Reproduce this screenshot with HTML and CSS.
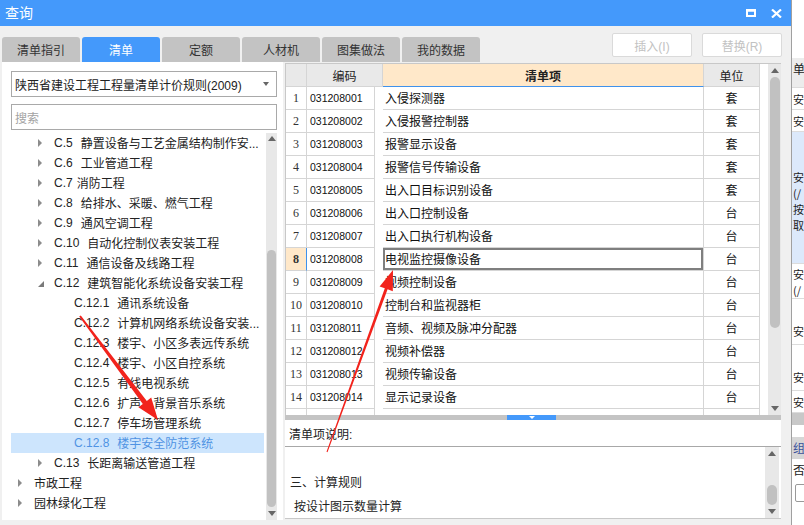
FILE: index.html
```html
<!DOCTYPE html>
<html lang="zh">
<head>
<meta charset="utf-8">
<title>查询</title>
<link rel="stylesheet" href="styles.css">
</head>
<body>
<div class="screen">
  <div class="dialog">
    <div class="titlebar">
      <span class="title">查询</span>
      <span class="winbtns">
        <svg width="10" height="8" viewBox="0 0 10 8"><rect x="1" y="1.5" width="8" height="5.5" fill="none" stroke="#fff" stroke-width="2"/><rect x="0" y="0" width="10" height="2.5" fill="#fff"/></svg>
        <svg width="11" height="9" viewBox="0 0 11 9"><path d="M1 0.5 L10 8.5 M10 0.5 L1 8.5" stroke="#fff" stroke-width="2.2"/></svg>
      </span>
    </div>
    <div class="toolbar">
      <div class="tabs">
        <div class="tab">清单指引</div>
        <div class="tab active">清单</div>
        <div class="tab">定额</div>
        <div class="tab">人材机</div>
        <div class="tab">图集做法</div>
        <div class="tab">我的数据</div>
      </div>
      <div class="actions">
        <div class="btn">插入(I)</div>
        <div class="btn">替换(R)</div>
      </div>
    </div>
    <div class="main">
      <div class="left">
        <div class="select"><span>陕西省建设工程工程量清单计价规则(2009)</span><span class="caret"></span></div>
        <div class="search">搜索</div>
        <div class="tree-wrap">
          <div class="tree">
            <div class="row l2"><span class="tri"></span><span class="code">C.5</span><span>静置设备与工艺金属结构制作安...</span></div>
            <div class="row l2"><span class="tri"></span><span class="code">C.6</span><span>工业管道工程</span></div>
            <div class="row l2"><span class="tri"></span><span class="code narrow">C.7</span><span>消防工程</span></div>
            <div class="row l2"><span class="tri"></span><span class="code">C.8</span><span>给排水、采暖、燃气工程</span></div>
            <div class="row l2"><span class="tri"></span><span class="code">C.9</span><span>通风空调工程</span></div>
            <div class="row l2"><span class="tri"></span><span class="code">C.10</span><span>自动化控制仪表安装工程</span></div>
            <div class="row l2"><span class="tri"></span><span class="code">C.11</span><span>通信设备及线路工程</span></div>
            <div class="row l2"><span class="tri open"></span><span class="code">C.12</span><span>建筑智能化系统设备安装工程</span></div>
            <div class="row l3"><span class="code">C.12.1</span><span>通讯系统设备</span></div>
            <div class="row l3"><span class="code">C.12.2</span><span>计算机网络系统设备安装...</span></div>
            <div class="row l3"><span class="code">C.12.3</span><span>楼宇、小区多表远传系统</span></div>
            <div class="row l3"><span class="code">C.12.4</span><span>楼宇、小区自控系统</span></div>
            <div class="row l3"><span class="code">C.12.5</span><span>有线电视系统</span></div>
            <div class="row l3"><span class="code">C.12.6</span><span>扩声、背景音乐系统</span></div>
            <div class="row l3"><span class="code">C.12.7</span><span>停车场管理系统</span></div>
            <div class="row l3 selected"><span class="code">C.12.8</span><span>楼宇安全防范系统</span></div>
            <div class="row l2"><span class="tri"></span><span class="code">C.13</span><span>长距离输送管道工程</span></div>
            <div class="row l1"><span class="tri"></span><span>市政工程</span></div>
            <div class="row l1"><span class="tri"></span><span>园林绿化工程</span></div>
          </div>
          <div class="sb sb-tree">
            <span class="sb-up"></span>
            <span class="sb-space"></span>
            <span class="sb-thumb"></span>
            <span class="sb-down"></span>
          </div>
        </div>
      </div>
      <div class="right">
        <div class="grid-wrap">
          <div class="grid">
            <div class="cell head"></div>
            <div class="cell head c">编码</div>
            <div class="cell head name c">清单项</div>
            <div class="cell head c">单位</div>

            <div class="cell num">1</div><div class="cell code">031208001</div><div class="cell">入侵探测器</div><div class="cell c">套</div>
            <div class="cell num">2</div><div class="cell code">031208002</div><div class="cell">入侵报警控制器</div><div class="cell c">套</div>
            <div class="cell num">3</div><div class="cell code">031208003</div><div class="cell">报警显示设备</div><div class="cell c">套</div>
            <div class="cell num">4</div><div class="cell code">031208004</div><div class="cell">报警信号传输设备</div><div class="cell c">套</div>
            <div class="cell num">5</div><div class="cell code">031208005</div><div class="cell">出入口目标识别设备</div><div class="cell c">套</div>
            <div class="cell num">6</div><div class="cell code">031208006</div><div class="cell">出入口控制设备</div><div class="cell c">台</div>
            <div class="cell num">7</div><div class="cell code">031208007</div><div class="cell">出入口执行机构设备</div><div class="cell c">台</div>
            <div class="cell num cur">8</div><div class="cell code">031208008</div><div class="cell focus">电视监控摄像设备</div><div class="cell c">台</div>
            <div class="cell num">9</div><div class="cell code">031208009</div><div class="cell">视频控制设备</div><div class="cell c">台</div>
            <div class="cell num">10</div><div class="cell code">031208010</div><div class="cell">控制台和监视器柜</div><div class="cell c">台</div>
            <div class="cell num">11</div><div class="cell code">031208011</div><div class="cell">音频、视频及脉冲分配器</div><div class="cell c">台</div>
            <div class="cell num">12</div><div class="cell code">031208012</div><div class="cell">视频补偿器</div><div class="cell c">台</div>
            <div class="cell num">13</div><div class="cell code">031208013</div><div class="cell">视频传输设备</div><div class="cell c">台</div>
            <div class="cell num">14</div><div class="cell code">031208014</div><div class="cell">显示记录设备</div><div class="cell c">台</div>
            <div class="cell num"></div><div class="cell code"></div><div class="cell"></div><div class="cell c"></div>
          </div>
          <div class="grid-gap"></div>
          <div class="sb sb-grid">
            <span class="sb-up"></span>
            <span class="sb-thumb"></span>
            <span class="sb-space"></span>
            <span class="sb-down"></span>
          </div>
        </div>
        <div class="splitter"><span class="grip"><span class="grip-arrow"></span></span></div>
        <div class="desc-head">清单项说明:</div>
        <div class="desc">
          <div class="desc-text">
            <div class="line">三、计算规则</div>
            <div class="line indent">按设计图示数量计算</div>
          </div>
          <div class="sb sb-desc">
            <span class="sb-up"></span>
            <span class="sb-space"></span>
            <span class="sb-thumb"></span>
            <span class="sb-down"></span>
          </div>
        </div>
      </div>
    </div>
  </div>
  <div class="behind">
    <div class="bseg b-top"></div>
    <div class="bseg b-head">单</div>
    <div class="bseg b-row">安</div>
    <div class="bseg b-row">安</div>
    <div class="bseg b-sel">安<br>(/<br>按<br>取</div>
    <div class="bseg b-two">安<br>(/</div>
    <div class="bseg b-mid">安</div>
    <div class="bseg b-mid">安</div>
    <div class="bseg b-short">安</div>
    <div class="bseg b-bar"></div>
    <div class="bseg b-blank"></div>
    <div class="bseg b-group">组</div>
    <div class="bseg b-no">否</div>
    <div class="bseg b-check"><span class="chk"></span></div>
  </div>
  <svg class="annot" width="804" height="525" viewBox="0 0 804 525">
    <polygon fill="#f2231c" points="80.8,315.4 146.8,400.9 151.2,397.6 158,420 138.4,407.2 142.8,403.9 79.2,316.6"/>
    <polygon fill="#f2231c" points="326.5,451.8 384.8,288.3 379.6,286.4 393,270 392.8,291.2 387.6,289.3 327.5,452.2"/>
  </svg>
</div>
</body>
</html>
```

FILE: styles.css
```css
* { box-sizing: border-box; margin: 0; padding: 0; }
html, body { width: 804px; height: 525px; overflow: hidden; }
body {
  font-family: "Liberation Sans", "Noto Sans CJK SC", sans-serif;
  font-size: 12px;
  color: #222;
  background: #fff;
}
.screen { position: relative; display: flex; width: 804px; height: 525px; }

.dialog {
  width: 791px; height: 525px;
  background: #f0f0f0;
  display: flex; flex-direction: column;
}
.titlebar {
  height: 26px; flex: none;
  background: #4499fb;
  display: flex; align-items: center;
  padding: 0 9px 0 5px;
  color: #fff;
}
.title { font-size: 14px; flex: 1; line-height: 20px; }
.winbtns { display: flex; align-items: center; gap: 15px; }
.winbtns svg { display: block; }

.toolbar { height: 36px; flex: none; display: flex; padding: 0 9px 0 2px; }
.tabs { display: flex; gap: 2px; align-self: flex-end; }
.tab {
  width: 78px; height: 25px;
  background: #c3c3c3;
  border-radius: 3px 3px 0 0;
  display: flex; align-items: center; justify-content: center;
  color: #333; font-size: 12px;
}
.tab.active { background: #4499fb; color: #fff; }
.actions { margin-left: auto; display: flex; gap: 10px; padding-top: 7px; }
.btn {
  width: 80px; height: 24px;
  border: 1px solid #dadada; border-radius: 2px;
  background: #fff; color: #c2c2c2;
  display: flex; align-items: center; justify-content: center;
}

.main { flex: 1; display: flex; gap: 2px; padding: 0 10px 5px 2px; }

/* left panel */
.left {
  width: 281px; background: #fff;
  display: flex; flex-direction: column;
  padding: 9px 6px 0 9px;
}
.select {
  height: 26px; border: 1px solid #a9a9a9;
  display: flex; align-items: center; justify-content: space-between;
  padding: 0 7px 0 3px; color: #222;
}
.caret { width: 0; height: 0; border-left: 3.5px solid transparent; border-right: 3.5px solid transparent; border-top: 4px solid #666; }
.search {
  margin-top: 7px; height: 26px; border: 1px solid #a9a9a9;
  display: flex; align-items: center; padding-left: 3px; color: #a3a3a3;
}
.tree-wrap { margin-top: 3px; flex: 1; display: flex; min-height: 0; }
.tree { flex: 1; overflow: hidden; }
.row {
  height: 20px; display: flex; align-items: center;
  white-space: nowrap; color: #222; margin-right: 2px;
  padding-bottom: 1px;
}
.row.l1 { padding-left: 7px; }
.row.l2 { padding-left: 27px; }
.row.l3 { padding-left: 63px; }
.tri {
  width: 0; height: 0; margin-right: 12px;
  border-left: 4px solid #8c8c8c;
  border-top: 4px solid transparent; border-bottom: 4px solid transparent;
}
.tri.open {
  border-left: 6px solid transparent; border-top: 0;
  border-bottom: 6px solid #7a7a7a; margin-right: 10px; margin-top: 3px;
}
.code { margin-right: 8px; }
.code.narrow { margin-right: 4px; }
.row.selected { background: #cde5fd; color: #4f93e3; }

/* scrollbars */
.sb { background: #e8e8e8; display: flex; flex-direction: column; align-items: center; flex: none; }
.sb-up, .sb-down { display: flex; align-items: center; justify-content: center; flex: none; }
.sb-up::after { content: ""; border-left: 4.5px solid transparent; border-right: 4.5px solid transparent; border-bottom: 5px solid #666; }
.sb-down::after { content: ""; border-left: 4.5px solid transparent; border-right: 4.5px solid transparent; border-top: 5px solid #666; }
.sb-thumb { width: 9px; background: #c1c1c1; border-radius: 5px; flex: none; }

.sb-tree { width: 11px; }
.sb-tree .sb-up { height: 11px; }
.sb-tree .sb-space { height: 106px; }
.sb-tree .sb-thumb { height: 257px; }
.sb-tree .sb-down { height: 13px; }

/* right panel */
.right { width: 496px; display: flex; flex-direction: column; padding-top: 1px; }
.grid-wrap {
  height: 352px; flex: none;
  border-top: 1px solid #c8c8c8; border-left: 1px solid #c8c8c8;
  background: #fff; display: flex; overflow: hidden;
}
.grid {
  width: 474px; flex: none;
  display: grid;
  grid-template-columns: 21px 76px 321px 56px;
  grid-auto-rows: 23px;
  align-content: start;
}
.cell {
  border-right: 1px solid #d5d5d5; border-bottom: 1px solid #d5d5d5;
  display: flex; align-items: center;
  padding-left: 2px; padding-bottom: 2px; white-space: nowrap; overflow: hidden;
  color: #111;
}
.cell.c { justify-content: center; padding-left: 0; }
.cell.head { background: #e9e9e9; color: #222; padding-bottom: 0; }
.cell.head.name { background: #ffe8c9; font-weight: bold; border-bottom-color: #3f92ec; }
.cell.num {
  font-family: "Liberation Serif", serif; font-size: 12px; color: #333;
  justify-content: center; padding-left: 0; padding-bottom: 0;
}
.cell.num.cur { background: #ffe8c9; font-weight: bold; border-right-color: #3f92ec; }
.cell.code { font-size: 10.5px; padding-left: 3px; padding-bottom: 1px; }
.cell.focus { box-shadow: inset 0 0 0 2px #7f7f7f; }
.grid-gap { width: 8px; flex: none; }
.sb-grid { width: 13px; }
.sb-grid .sb-up { height: 13px; }
.sb-grid .sb-thumb { width: 10px; height: 251px; }
.sb-grid .sb-space { height: 74px; }
.sb-grid .sb-down { height: 13px; }

.splitter { height: 5px; flex: none; background: #c4c4c4; padding-left: 222px; display: flex; }
.grip { width: 49px; height: 5px; background: #4499fb; display: flex; justify-content: center; align-items: center; }
.grip-arrow { border-left: 3.5px solid transparent; border-right: 3.5px solid transparent; border-top: 3.5px solid #fff; }

.desc-head {
  height: 27px; flex: none; background: #fff;
  border-bottom: 1px solid #a8a8a8;
  display: flex; align-items: center; padding-left: 4px;
}
.desc { height: 72px; flex: none; background: #fff; display: flex; border-bottom: 1px solid #c8c8c8; }
.desc-text { flex: 1; padding: 24px 0 0 5px; overflow: hidden; }
.line { height: 24px; line-height: 24px; white-space: nowrap; }
.line.indent { padding-left: 4px; }
.sb-desc { width: 14px; margin-right: 2px; }
.sb-desc .sb-up { height: 12px; }
.sb-desc .sb-space { height: 26px; }
.sb-desc .sb-thumb { height: 20px; width: 10px; }
.sb-desc .sb-down { height: 13px; }

/* window behind (right sliver) */
.behind {
  flex: 1; height: 525px; background: #fff;
  border-left: 1px solid #a0a0a0;
  display: flex; flex-direction: column; overflow: hidden;
  font-family: "Noto Sans CJK SC", sans-serif; font-size: 11px; color: #222;
}
.bseg { flex: none; padding-left: 1px; line-height: 16px; white-space: nowrap; border-bottom: 1px solid #dcdcdc; }
.b-top { height: 58px; border-bottom: 0; }
.b-head { height: 30px; background: #ececec; padding-top: 2px; font-size: 12px; line-height: 17px; }
.b-row { height: 22px; padding-top: 3px; }
.b-sel { height: 132px; background: #dce9fb; padding-top: 37px; }
.b-two { height: 35px; padding-top: 2px; }
.b-mid { height: 46px; padding-top: 24px; }
.b-short { height: 22px; padding-top: 3px; }
.b-bar { height: 12px; background: #c8c8c8; border-bottom: 0; }
.b-blank { height: 12px; border-bottom: 0; }
.b-group { height: 22px; background: #d6d6d6; padding-top: 3px; color: #3a4f9a; border-bottom: 0; font-size: 12px; }
.b-no { height: 22px; padding-top: 3px; border-bottom: 0; font-size: 12px; }
.b-check { height: 24px; padding-top: 3px; border-bottom: 0; }
.chk { display: block; width: 16px; height: 18px; border: 1px solid #999; border-radius: 2px; margin-left: 2px; }

.annot { position: absolute; left: 0; top: 0; pointer-events: none; }
```
